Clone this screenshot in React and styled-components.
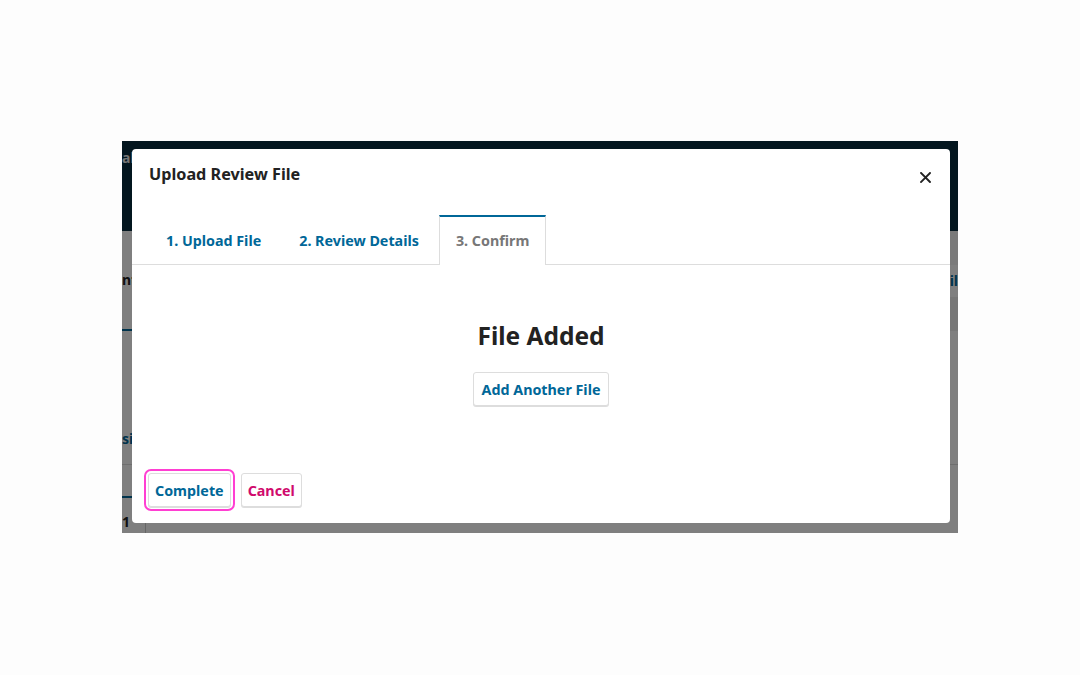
import React from "react";
import styled, { createGlobalStyle } from "styled-components";

const Global = createGlobalStyle`
  html, body { margin: 0; padding: 0; background: #fdfdfd; }
  body { font-family: "Noto Sans", "Open Sans", sans-serif; }
  * { box-sizing: border-box; }
`;

const Page = styled.div`
  width: 1080px;
  height: 675px;
  padding: 141px 122px 0 122px;
`;

const Frame = styled.div`
  position: relative;
  width: 836px;
  height: 392px;
  overflow: hidden;
  background: #fff;
`;

const BgPage = styled.div`
  display: flex;
  flex-direction: column;
  height: 100%;
`;

const BgHeader = styled.div`
  height: 90px;
  background: #062c3e;
  color: #e8e8e8;
  font-size: 14px;
  font-weight: 700;
  padding-top: 8px;
  line-height: 18px;
`;

const BgRow = styled.div`
  height: ${(p) => p.$h}px;
  display: flex;
  justify-content: space-between;
  align-items: ${(p) => p.$align || "center"};
  padding-bottom: ${(p) => p.$pb || 0}px;
  border-bottom: ${(p) => (p.$line ? "1px solid #ddd" : "none")};
  font-size: 14px;
  font-weight: 700;
  line-height: 18px;
`;

const BgText = styled.span`
  color: ${(p) => (p.$blue ? "#006798" : "#222")};
`;

const BgTab = styled.div`
  align-self: stretch;
  display: flex;
  align-items: center;
  width: 10px;
  border-bottom: 2px solid ${(p) => (p.$show ? "#006798" : "transparent")};
`;

const BgSide = styled.div`
  width: 120px;
  align-self: stretch;
  display: flex;
  flex-direction: column;
  align-items: flex-end;
`;

const BgSideBand = styled.div`
  height: ${(p) => p.$h}px;
  width: 100%;
  background: ${(p) => p.$bg};
  display: flex;
  align-items: center;
  justify-content: flex-end;
`;

const BgCell = styled.div`
  width: 24px;
  border-right: 1px solid #ccc;
  align-self: stretch;
  display: flex;
  align-items: flex-end;
  padding-bottom: 2px;
  color: #222;
`;

const Overlay = styled.div`
  position: absolute;
  inset: 0;
  background: rgba(0, 0, 0, 0.5);
`;

const Modal = styled.div`
  position: absolute;
  top: 8px;
  left: 10px;
  width: 818px;
  height: 374px;
  background: #fff;
  border-radius: 4px;
  display: flex;
  flex-direction: column;
`;

const ModalHeader = styled.div`
  height: 67px;
  padding: 16px 16px 0 17px;
  display: flex;
  justify-content: space-between;
  align-items: flex-start;
`;

const Title = styled.h2`
  margin: 0;
  font-size: 16.2px;
  line-height: 18px;
  font-weight: 700;
  color: #222;
`;

const Close = styled.button`
  border: 0;
  background: none;
  padding: 0;
  margin: 3px 0 0 0;
  width: 18px;
  height: 18px;
  display: flex;
  align-items: center;
  justify-content: center;
  cursor: pointer;
`;

const Tabs = styled.div`
  height: 49px;
  padding: 0 16px;
  display: flex;
  align-items: flex-end;
  gap: 2px;
  border-bottom: 1px solid #ddd;
`;

const Tab = styled.div`
  height: 50px;
  margin-bottom: ${(p) => (p.$active ? -1 : 0)}px;
  padding: 0 ${(p) => (p.$active ? 16 : 17)}px ${(p) => (p.$active ? 1 : 0)}px;
  display: flex;
  align-items: center;
  font-size: 14.3px;
  font-weight: 700;
  color: ${(p) => (p.$active ? "#777" : "#006798")};
  background: ${(p) => (p.$active ? "#fff" : "transparent")};
  border-top: 2px solid ${(p) => (p.$active ? "#006798" : "transparent")};
  border-left: 1px solid ${(p) => (p.$active ? "#ddd" : "transparent")};
  border-right: 1px solid ${(p) => (p.$active ? "#ddd" : "transparent")};
`;

const Body = styled.div`
  flex: 1;
  display: flex;
  flex-direction: column;
  align-items: center;
  padding-top: 56px;
  gap: 21px;
`;

const Heading = styled.h3`
  margin: 0;
  font-size: 24.5px;
  line-height: 30px;
  font-weight: 700;
  color: #222;
`;

const Button = styled.button`
  height: 34px;
  padding: 0 ${(p) => p.$px || 8}px;
  font-family: "Noto Sans", "Open Sans", sans-serif;
  font-size: 14.3px;
  font-weight: 700;
  color: ${(p) => (p.$danger ? "#d00a6c" : "#006798")};
  background: #fff;
  border: 1px solid #ddd;
  border-radius: 3px;
  box-shadow: 0 1px 0 #ddd;
  cursor: pointer;
  outline: ${(p) => (p.$focus ? "2px solid #ff3fd2" : "none")};
  outline-offset: 2px;
`;

const Footer = styled.div`
  padding: 0 16px 16px 16px;
  display: flex;
  gap: 10px;
  align-items: center;
`;

export default function App() {
  return (
    <>
      <Global />
      <Page>
        <Frame>
          <BgPage>
            <BgHeader>al</BgHeader>
            <BgRow $h={100}>
              <BgTab $show>
                <BgText>nt</BgText>
              </BgTab>
              <BgSide>
                <BgSideBand $h={34} $bg="#f4f4f4" />
                <BgSideBand $h={32} $bg="#fff">
                  <BgText $blue>il</BgText>
                </BgSideBand>
                <BgSideBand $h={34} $bg="#eee" />
              </BgSide>
            </BgRow>
            <BgRow $h={134} $line $align="flex-end" $pb={16}>
              <BgText $blue>si</BgText>
            </BgRow>
            <BgRow $h={33}>
              <BgTab $show />
            </BgRow>
            <BgRow $h={35} $align="stretch">
              <BgCell>1</BgCell>
            </BgRow>
          </BgPage>
          <Overlay />
          <Modal>
            <ModalHeader>
              <Title>Upload Review File</Title>
              <Close aria-label="Close">
                <svg width="11" height="11" viewBox="0 0 11 11">
                  <path d="M1 1L10 10M10 1L1 10" stroke="#222" strokeWidth="1.9" strokeLinecap="square" />
                </svg>
              </Close>
            </ModalHeader>
            <Tabs>
              <Tab>1. Upload File</Tab>
              <Tab>2. Review Details</Tab>
              <Tab $active>3. Confirm</Tab>
            </Tabs>
            <Body>
              <Heading>File Added</Heading>
              <Button>Add Another File</Button>
            </Body>
            <Footer>
              <Button $focus $px={6}>Complete</Button>
              <Button $danger $px={6}>Cancel</Button>
            </Footer>
          </Modal>
        </Frame>
      </Page>
    </>
  );
}
